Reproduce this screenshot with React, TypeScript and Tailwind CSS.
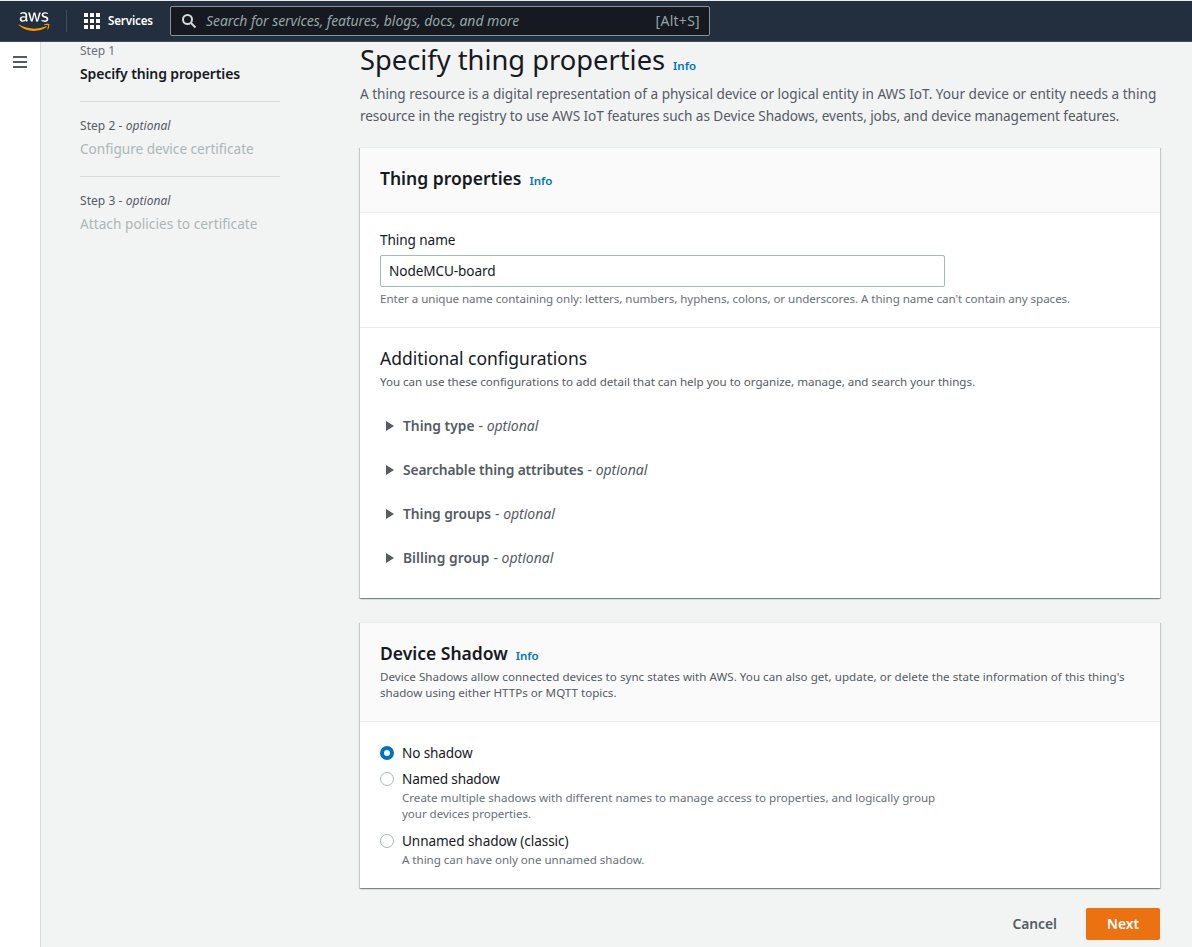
import React from "react";
import { FaAws } from "react-icons/fa";

function Info() {
  return <a className="ml-2 text-[11.5px] font-semibold text-[#0073bb]">Info</a>;
}

function Step({ n, title, active, track = "" }: { n: number; title: string; active?: boolean; track?: string }) {
  return (
    <li className="h-[75px] pt-px">
      <div className={"h-4 text-xs leading-4 " + (active ? "text-[#687078]" : "tracking-[0.053px] text-[#545b64]")}>
        Step {n}
        {!active && <> - <i>optional</i></>}
      </div>
      <div
        className={
          "mt-1 h-[22px] whitespace-nowrap leading-[22px] " +
          (active ? "text-sm font-semibold tracking-[-0.126px] text-[#16191f] " : "text-[13.6px] text-[#aab7b8] ") +
          track
        }
      >
        {title}
      </div>
      {n < 3 && <div className="mt-4 h-px bg-[#d5dbdb]" />}
    </li>
  );
}

function Radio({ checked, label, labelClass, children }: { checked?: boolean; label: string; labelClass: string; children?: React.ReactNode }) {
  return (
    <label className="flex gap-2">
      <span
        className={
          "mt-1 size-3.5 shrink-0 rounded-full bg-white " +
          (checked ? "border-4 border-[#0073bb]" : "border border-[#aab7b8]")
        }
      />
      <div>
        <div className={"h-[21px] text-[13.6px] leading-[21px] " + labelClass}>{label}</div>
        {children && <div className="pt-px text-[11.6px] leading-4 whitespace-nowrap text-[#687078]">{children}</div>}
      </div>
    </label>
  );
}

const configs = [
  { title: "Thing type", track: "" },
  { title: "Searchable thing attributes", track: "tracking-[-0.126px]" },
  { title: "Thing groups", track: "tracking-[-0.06px]" },
  { title: "Billing group", track: "tracking-[0.03px]" },
];

function Card({ className, children }: { className: string; children: React.ReactNode }) {
  return (
    <section
      className={
        "border-t border-[#eaeded] bg-white shadow-[0_1px_1px_0_rgba(0,28,36,0.3),1px_1px_1px_0_rgba(0,28,36,0.15),-1px_1px_1px_0_rgba(0,28,36,0.15)] " +
        className
      }
    >
      {children}
    </section>
  );
}

export default function App() {
  return (
    <div className="h-[947px] w-[1192px] overflow-hidden bg-[#f2f3f3] font-['Noto_Sans',sans-serif] text-[#16191f]">
      <header className="flex h-[42px] items-center border-t border-b border-t-[#eaeded] border-b-[#414d5c] bg-[#232f3e]">
        <div className="relative ml-[17.5px] h-[25px] w-8">
          <FaAws className="absolute inset-0 h-[25px] w-8 text-white [clip-path:inset(0_0_40%_0)]" />
          <FaAws className="absolute inset-0 h-[25px] w-8 text-[#ff9900] [clip-path:inset(60%_0_0_0)]" />
        </div>
        <div className="ml-[16.5px] h-[22px] w-px bg-[#414d5c]" />
        <div className="ml-[17px] grid grid-cols-3 gap-0.5">
          {Array.from({ length: 9 }, (_, i) => (
            <span key={i} className="size-1 bg-white" />
          ))}
        </div>
        <div className="ml-2 w-[45px] text-[11.6px] font-semibold tracking-[-0.15px] text-white">Services</div>
        <div className="ml-[17px] flex h-[30px] w-[540px] items-center rounded-[2px] border border-[#879596] bg-[#16191f] pr-[9px] pl-[10px] text-sm text-[#95a5a6]">
          <svg viewBox="0 0 16 16" className="size-4 fill-none stroke-[#d5dbdb] stroke-2">
            <circle cx="6.5" cy="6.5" r="4.5" />
            <path d="M10 10l4.5 4.5" />
          </svg>
          <span className="ml-[9px] tracking-[-0.07px] italic">Search for services, features, blogs, docs, and more</span>
          <span className="ml-auto tracking-[0.28px]">[Alt+S]</span>
        </div>
      </header>
      <div className="flex h-[905px]">
        <div className="w-[41px] border-r border-[#d5dbdb] bg-white pt-[14px] pl-[13px]">
          <svg viewBox="0 0 14 12" className="h-3 w-3.5 fill-[#545b64]">
            <path d="M0 0h14v2H0zM0 5h14v2H0zM0 10h14v2H0z" />
          </svg>
        </div>
        <ul className="ml-[39px] w-[200px]">
          <Step n={1} title="Specify thing properties" active />
          <Step n={2} title="Configure device certificate" />
          <Step n={3} title="Attach policies to certificate" track="tracking-[0.06px]" />
        </ul>
        <main className="ml-20 w-[800px]">
          <h1 className="h-[34px] text-[27.3px] leading-[35px]">
            Specify thing properties
            <Info />
          </h1>
          <div className="mt-[7px] text-[13.6px] leading-[22px] whitespace-nowrap text-[#545b64]">
            <div className="tracking-[-0.012px]">
              A thing resource is a digital representation of a physical device or logical entity in AWS IoT. Your device or entity needs a thing
            </div>
            <div className="tracking-[-0.072px]">
              resource in the registry to use AWS IoT features such as Device Shadows, events, jobs, and device management features.
            </div>
          </div>
          <Card className="mt-5">
            <div className="h-[65px] border-b border-[#eaeded] bg-[#fafafa] px-5 pt-[19px]">
              <h2 className="h-[22px] text-[17.5px] leading-[22px] font-semibold">
                Thing properties
                <Info />
              </h2>
            </div>
            <div className="h-[115px] border-b border-[#eaeded] px-5 pt-4">
              <div className="h-[22px] text-[13.6px] leading-[22px] tracking-[-0.08px]">Thing name</div>
              <div className="mt-1 h-8 w-[565px] rounded-[2px] border border-[#aab7b8] pl-2 text-[13.6px] leading-[30px] tracking-[-0.09px]">
                NodeMCU-board
              </div>
              <div className="mt-1 text-[11.6px] leading-4 tracking-[-0.055px] whitespace-nowrap text-[#687078]">
                Enter a unique name containing only: letters, numbers, hyphens, colons, or underscores. A thing name can't contain any spaces.
              </div>
            </div>
            <div className="h-[270px] px-5 pt-[19px]">
              <h3 className="h-[22px] text-[17.5px] leading-[22px] tracking-[-0.02px]">Additional configurations</h3>
              <div className="mt-[5px] h-4 text-[11.6px] leading-4 tracking-[-0.025px] whitespace-nowrap text-[#545b64]">
                You can use these configurations to add detail that can help you to organize, manage, and search your things.
              </div>
              <div className="mt-[25px] flex flex-col gap-[22px]">
                {configs.map(({ title, track }) => (
                  <div key={title} className="flex h-[22px] items-center text-[13.8px] leading-[22px] text-[#545b64]">
                    <svg viewBox="0 0 8 10" className="ml-1.5 h-2.5 w-2 fill-[#545b64]">
                      <path d="M0 0l8 5-8 5z" />
                    </svg>
                    <span className={"ml-[9px] font-semibold " + track}>{title}</span>
                    <span className="ml-1 text-sm leading-[22px]">
                      - <i>optional</i>
                    </span>
                  </div>
                ))}
              </div>
            </div>
          </Card>
          <Card className="mt-6">
            <div className="h-[99px] border-b border-[#eaeded] bg-[#fafafa] px-5 pt-[19px]">
              <h2 className="h-[22px] text-[17.5px] leading-[22px] font-semibold">
                Device Shadow
                <Info />
              </h2>
              <div className="mt-[5px] text-[11.6px] leading-4 whitespace-nowrap text-[#545b64]">
                <div className="tracking-[0.024px]">
                  Device Shadows allow connected devices to sync states with AWS. You can also get, update, or delete the state information of this thing's
                </div>
                <div>shadow using either HTTPs or MQTT topics.</div>
              </div>
            </div>
            <div className="h-[166px] px-5 pt-5">
              <div className="flex flex-col">
                <Radio checked label="No shadow" labelClass="tracking-[-0.13px]" />
                <div className="mt-[5px]">
                  <Radio label="Named shadow" labelClass="tracking-[-0.155px]">
                    <div className="tracking-[-0.013px]">
                      Create multiple shadows with different names to manage access to properties, and logically group
                    </div>
                    <div className="tracking-[-0.06px]">your devices properties.</div>
                  </Radio>
                </div>
                <div className="mt-2">
                  <Radio label="Unnamed shadow (classic)" labelClass="tracking-[-0.09px]">
                    <div className="tracking-[-0.03px]">A thing can have only one unnamed shadow.</div>
                  </Radio>
                </div>
              </div>
            </div>
          </Card>
          <div className="mt-5 flex h-8 items-center justify-end gap-[29px] text-[13.8px] font-semibold">
            <button className="text-[#545b64]">Cancel</button>
            <button className="h-8 w-[74px] rounded-[2px] bg-[#ec7211] text-white">Next</button>
          </div>
        </main>
      </div>
    </div>
  );
}
